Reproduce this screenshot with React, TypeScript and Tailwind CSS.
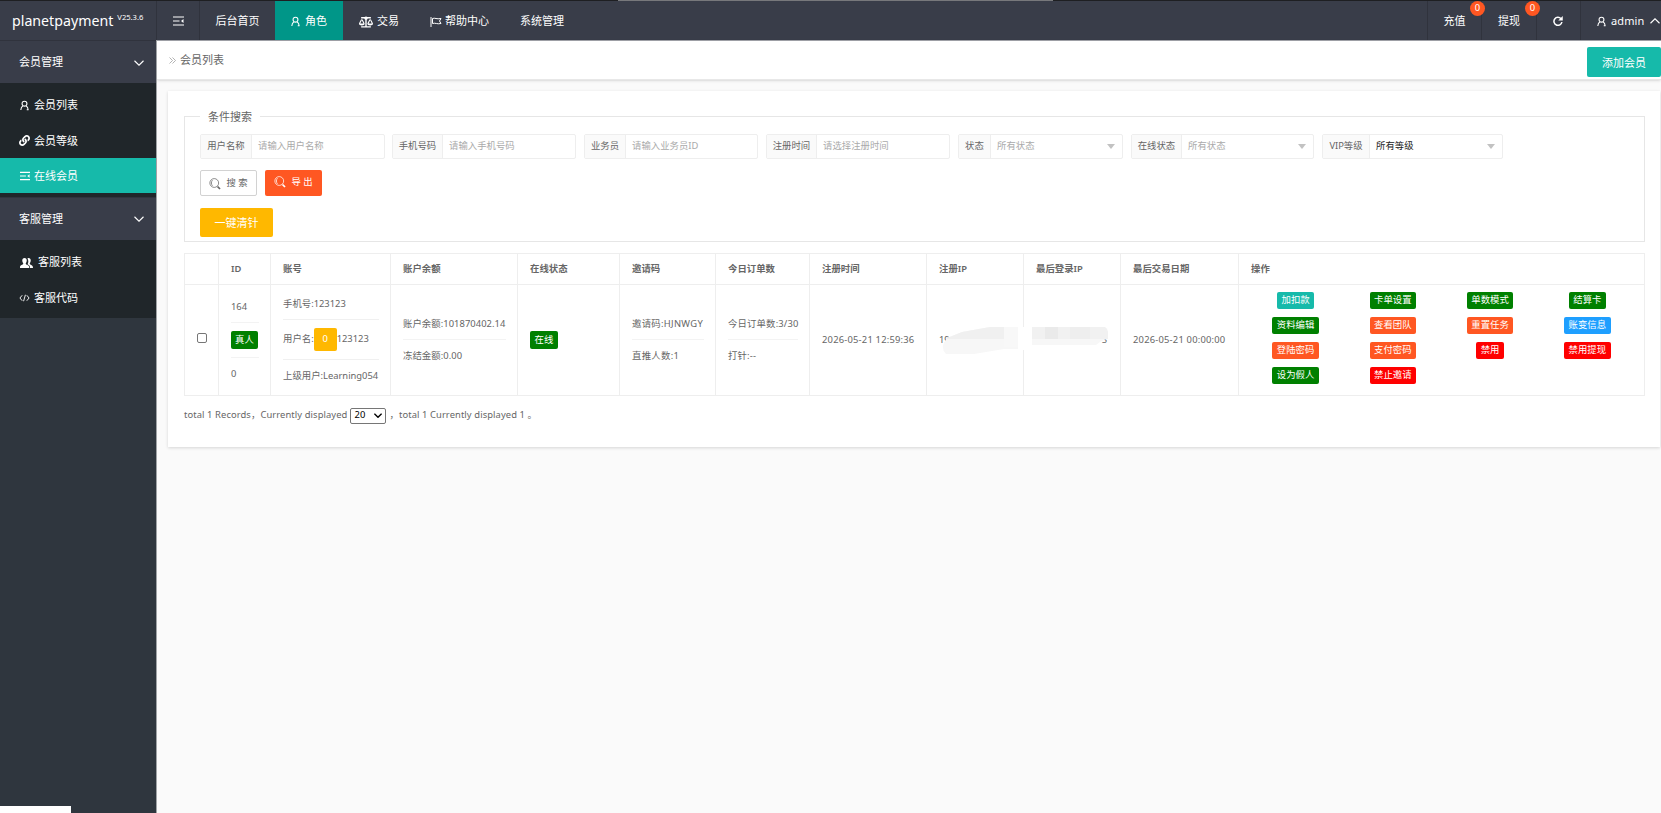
import React from "react";
import clsx from "clsx";
import { FaBalanceScale, FaLink } from "react-icons/fa";

type IconProps = { className?: string };

const UserIcon = ({ className }: IconProps) => (
  <svg viewBox="0 0 20 22" className={className} fill="none" stroke="currentColor" strokeWidth="2.4">
    <circle cx="10" cy="7" r="5.4" />
    <path d="M6.5 11.5C3.5 13.5 2 17 1.8 21M13.5 11.5C16.500 13.500 18 17 18.200 21M15 20.500h4" />
  </svg>
);

const SpreadIcon = ({ className }: IconProps) => (
  <svg viewBox="0 0 22 20" className={className} fill="none" stroke="currentColor" strokeWidth="2.400">
    <path d="M0 2h22M0 10h13M0 18h22" />
    <path d="M21 6v8l-5-4z" fill="currentColor" stroke="none" />
  </svg>
);

const FlagIcon = ({ className }: IconProps) => (
  <svg viewBox="0 0 24 20" className={className} fill="none" stroke="currentColor" strokeWidth="2">
    <path d="M2 0v20M5 3c5-2 8 2 17 0l-3 5 3 5c-8 2-11-2-17 0z" />
  </svg>
);

const GroupIcon = ({ className }: IconProps) => (
  <svg viewBox="0 0 26 20" className={className} fill="currentColor">
    <path d="M9 0c3 0 4.500 2 4.500 5 0 2.500-1 4-2 5.500 0 2 1 2.500 3.500 3.500s3.500 2 3.500 6H0c0-4 .5-5 3-6s3.500-1.500 3.500-3.500c-1-1.500-2-3-2-5.500 0-3 1.500-5 4.500-5z" />
    <path d="M17 0c3 0 4.500 2 4.500 5 0 2.500-1 4-2 5.500 0 2 1 2.500 3 3.500s3.500 2 3.500 6h-6c0-4-1-5.500-5-7.500 0 0 .5-1 1-2 1-2 1-6-1-9.500.5-.7 1-1 2-1z" />
  </svg>
);

const CodeIcon = ({ className }: IconProps) => (
  <svg viewBox="0 0 24 16" className={className} fill="none" stroke="currentColor" strokeWidth="2">
    <path d="M7 2L2 8l5 6M17 2l5 6-5 6M14 1l-4 14" />
  </svg>
);

const SearchIcon = ({ className }: IconProps) => (
  <svg viewBox="0 0 24 24" className={className} fill="none" stroke="currentColor" strokeWidth="1.500">
    <circle cx="10.500" cy="10" r="8.800" />
    <path d="M7 4.500c-3 3-3 8 0 11" />
    <path d="M17 17l5 5" strokeWidth="3.500" />
  </svg>
);

const RefreshIcon = ({ className }: IconProps) => (
  <svg viewBox="0 0 20 20" className={className} fill="none" stroke="currentColor" strokeWidth="3">
    <path d="M16 5.500A8 8 0 1 0 17.800 12" />
    <path d="M19.500 0v9h-9z" fill="currentColor" stroke="none" />
  </svg>
);

const Chevron = ({ className }: IconProps) => (
  <svg viewBox="0 0 20 12" className={className} fill="none" stroke="currentColor" strokeWidth="2.200">
    <path d="M1 1.500l9 9 9-9" />
  </svg>
);

type MenuItem = { label: string; icon: React.ReactNode; active?: boolean };

const memberMenu: MenuItem[] = [
  { label: "会员列表", icon: <UserIcon className="mr-[5px] h-[11px] w-[9px]" /> },
  { label: "会员等级", icon: <FaLink className="mr-[4px] -ml-px h-[11px] w-[11px]" /> },
  { label: "在线会员", icon: <SpreadIcon className="mr-[4px] h-[10px] w-[10px]" />, active: true },
];

const serviceMenu: MenuItem[] = [
  { label: "客服列表", icon: <GroupIcon className="mr-[5px] h-[10px] w-[13px]" /> },
  { label: "客服代码", icon: <CodeIcon className="mr-[4px] -ml-px h-[8px] w-[11px]" /> },
];

const filters = [
  { label: "用户名称", text: "请输入用户名称", labelWidth: "w-[51px]", width: "w-[185px]", gap: "mr-[7px]" },
  { label: "手机号码", text: "请输入手机号码", labelWidth: "w-[50px]", width: "w-[184px]", gap: "mr-[8px]" },
  { label: "业务员", text: "请输入业务员ID", labelWidth: "w-[41px]", width: "w-[174px]", gap: "mr-[8px]" },
  { label: "注册时间", text: "请选择注册时间", labelWidth: "w-[50px]", width: "w-[184px]", gap: "mr-[8px]" },
  { label: "状态", text: "所有状态", labelWidth: "w-[32px]", width: "w-[165px]", gap: "mr-[8px]", select: true },
  { label: "在线状态", text: "所有状态", labelWidth: "w-[50px]", width: "w-[183px]", gap: "mr-[8px]", select: true },
  { label: "VIP等级", text: "所有等级", labelWidth: "w-[47px]", width: "w-[181px]", gap: "", select: true, filled: true },
];

const columns = [
  { title: "", width: "w-[35px]" },
  { title: "ID", width: "w-[52px]" },
  { title: "账号", width: "w-[120px]" },
  { title: "账户余额", width: "w-[127px]" },
  { title: "在线状态", width: "w-[102px]" },
  { title: "邀请码", width: "w-[96px]" },
  { title: "今日订单数", width: "w-[94px]" },
  { title: "注册时间", width: "w-[117px]" },
  { title: "注册IP", width: "w-[97px]" },
  { title: "最后登录IP", width: "w-[97px]" },
  { title: "最后交易日期", width: "w-[118px]" },
  { title: "操作", width: "w-[406px]" },
];

const actions = [
  { label: "加扣款", color: "bg-[#16baaa]" },
  { label: "卡单设置", color: "bg-[#008000]" },
  { label: "单数模式", color: "bg-[#008000]" },
  { label: "结算卡", color: "bg-[#008000]" },
  { label: "资料编辑", color: "bg-[#008000]" },
  { label: "查看团队", color: "bg-[#ff5722]" },
  { label: "重置任务", color: "bg-[#ff5722]" },
  { label: "账变信息", color: "bg-[#1e9fff]" },
  { label: "登陆密码", color: "bg-[#ff5722]" },
  { label: "支付密码", color: "bg-[#ff5722]" },
  { label: "禁用", color: "bg-[#ff0000]" },
  { label: "禁用提现", color: "bg-[#ff0000]" },
  { label: "设为假人", color: "bg-[#008000]" },
  { label: "禁止邀请", color: "bg-[#ff0000]" },
];

const MenuGroup = ({ title }: { title: string }) => (
  <div className="flex h-[43px] items-center justify-between border-t border-[#30333d] bg-[#393d49] pt-px pr-[12px] pl-[19px]">
    <span>{title}</span>
    <Chevron className="h-[6px] w-[10px]" />
  </div>
);

const MenuList = ({ items }: { items: MenuItem[] }) => (
  <div className="bg-[#20262a] py-[4px]">
    {items.map((item) => (
      <div
        key={item.label}
        className={clsx("flex h-[35.300px] items-center pt-[2px] pl-5", item.active && "bg-[#16baaa]")}
      >
        {item.icon}
        <span>{item.label}</span>
      </div>
    ))}
  </div>
);

const Count = () => (
  <span className="absolute top-0 right-[-4px] z-10 flex h-[15px] w-[15px] items-center justify-center rounded-full bg-[#ff5722] text-[9.400px]">
    0
  </span>
);

const Split = ({ top, bottom }: { top: string; bottom: string }) => (
  <div className="-mt-px">
    <div className="h-[17px] leading-[17px]">{top}</div>
    <div className="my-[7px] h-px bg-[#f3f3f3]" />
    <div className="h-[17px] leading-[17px]">{bottom}</div>
  </div>
);

const border = "border-r border-b border-[#eee] py-0";
const cell = clsx(border, "pr-[11px] pl-[12px]");

const App = () => {
  return (
    <div className="flex h-[813px] w-[1661px] flex-col overflow-hidden bg-[#fafafa] font-['Noto_Sans','Noto_Sans_CJK_SC',sans-serif] text-[9.400px] whitespace-nowrap text-[#666]">
      <div className="flex h-px shrink-0 bg-[#1e1f22]">
        <div className="ml-[618px] w-[435px] bg-[#77787b]" />
      </div>

      {/* top bar */}
      <header className="flex h-[40px] shrink-0 border-b border-[#a0a2a8] bg-[#393d49] text-[11px] text-white">
        <div className="flex w-[157px] items-center border-r border-[#30333d] pl-[12px]">
          <span className="text-[14.200px]">planetpayment</span>
          <sup className="-top-1 ml-[4px] text-[7.600px]">V25.3.6</sup>
        </div>
        <div className="flex w-[43px] items-center justify-center border-r border-[#30333d] pt-px">
          <SpreadIcon className="h-[10px] w-[11px]" />
        </div>
        <div className="flex w-[75px] items-center justify-center pt-[2px]">后台首页</div>
        <div className="flex w-[68px] items-center justify-center gap-[5px] bg-[#009688] pt-[2px]">
          <UserIcon className="h-[11px] w-[9px]" />
          角色
        </div>
        <div className="flex w-[72px] items-center gap-1 pt-[2px] pl-4">
          <FaBalanceScale className="h-[12px] w-[14px]" />
          交易
        </div>
        <div className="flex w-[90px] items-center gap-[3px] pt-[2px] pl-[15px]">
          <FlagIcon className="h-[10px] w-[12px]" />
          帮助中心
        </div>
        <div className="flex items-center pt-[2px] pl-[15px]">系统管理</div>
        <div className="ml-auto flex">
          <div className="relative flex w-[54px] items-center justify-center border-l border-[#30333d] pt-[2px]">
            充值
            <Count />
          </div>
          <div className="relative flex w-[55px] items-center justify-center border-l border-[#30333d] pt-[2px]">
            提现
            <Count />
          </div>
          <div className="flex w-[44px] items-center justify-center border-l border-[#30333d] pt-px pr-px">
            <RefreshIcon className="h-[10px] w-[10px]" />
          </div>
          <div className="flex w-[81px] items-center border-l border-[#30333d] pt-px pl-4">
            <UserIcon className="mr-[5px] h-[11px] w-[9px]" />
            <span className="tracking-[0.1px]">admin</span>
            <Chevron className="ml-[6px] h-[6px] w-[10px] shrink-0 rotate-180" />
          </div>
        </div>
      </header>

      <div className="flex min-h-0 flex-1">
        <aside className="relative -mt-px flex w-[157px] shrink-0 flex-col border-r border-[#a0a3a6] bg-[#2f363e] text-[11px] text-white">
          <MenuGroup title="会员管理" />
          <MenuList items={memberMenu} />
          <MenuGroup title="客服管理" />
          <MenuList items={serviceMenu} />
          <div className="mt-auto h-[7px] w-[71px] bg-white" />
        </aside>

        <main className="min-w-0 flex-1">
          <div className="flex h-[39px] items-center justify-between border-b border-[#e8e8e8] bg-white pl-3 text-[11px] shadow-sm">
            <div className="flex items-center pt-px">
              <svg viewBox="0 0 14 14" className="mr-[4px] h-[7px] w-[7px]" fill="none" stroke="#999" strokeWidth="1.500">
                <path d="M1 1l6 6-6 6M7 1l6 6-6 6" />
              </svg>
              会员列表
            </div>
            <button className="mt-1 flex h-[30px] w-[74px] items-center justify-center rounded-[2px] bg-[#16baaa] pt-[2px] text-white">
              添加会员
            </button>
          </div>

          <section className="mt-[11px] mr-px ml-[11px] h-[356px] bg-white px-4 pt-[16px] shadow-[0_1px_3px_rgba(0,0,0,0.15)]">
            <fieldset className="h-[135px] w-[1461px] border border-[#e6e6e6] pl-[15px]">
              <legend className="h-[18px] px-2 text-[11px] leading-[20px]">条件搜索</legend>
              <div className="mt-[9px] flex h-[25px]">
                {filters.map((f) => (
                  <div
                    key={f.label}
                    className={clsx("flex items-center rounded-[2px] border border-[#eee]", f.width, f.gap)}
                  >
                    <div
                      className={clsx(
                        "flex h-full shrink-0 items-center justify-center border-r border-[#eee] bg-[#fafafa]",
                        f.labelWidth
                      )}
                    >
                      {f.label}
                    </div>
                    <span className={clsx("pl-[6px]", f.filled ? "text-[#222]" : "text-[#aaa]")}>{f.text}</span>
                    {f.select && (
                      <i className="mr-[7px] ml-auto border-x-[4.500px] border-t-[5px] border-x-transparent border-t-[#c2c2c2]" />
                    )}
                  </div>
                ))}
              </div>
              <div className="mt-[11px] flex h-[26px] gap-2">
                <button className="flex w-[57px] items-center justify-center rounded-[2px] border border-[#d2d2d2] pt-px">
                  <SearchIcon className="mr-[5px] h-[12px] w-[12px]" />搜 索
                </button>
                <button className="flex w-[57px] items-center justify-center rounded-[2px] bg-[#ff5722] pb-[2px] text-white">
                  <SearchIcon className="mr-[5px] h-[12px] w-[12px]" />导 出
                </button>
              </div>
              <button className="mt-[12px] flex h-[29px] w-[73px] items-center justify-center rounded-[2px] bg-[#ffb800] pt-[2px] text-[11px] text-white">
                一键清针
              </button>
            </fieldset>

            <table className="mt-[11px] w-[1461px] table-fixed border-separate border-spacing-0">
              <thead>
                <tr className="h-[32px]">
                  {columns.map((c, i) => (
                    <th
                      key={c.title}
                      className={clsx(cell, c.width, "border-t text-left font-semibold", i === 0 && "border-l")}
                    >
                      {c.title}
                    </th>
                  ))}
                </tr>
              </thead>
              <tbody>
                <tr className="h-[111px]">
                  <td className={clsx(cell, "border-l")}>
                    <div className="mt-[-4px] h-[10px] w-[10px] rounded-[2px] border border-[#767676]" />
                  </td>
                  <td className={cell}>
                    <div className="h-[17px] leading-[17px]">164</div>
                    <div className="mt-[7px] h-px bg-[#f3f3f3]" />
                    <div className="my-[8px] flex h-[18px] w-[27px] items-center justify-center rounded-[2px] bg-[#008000] text-white">
                      真人
                    </div>
                    <div className="mb-[7px] h-px bg-[#f3f3f3]" />
                    <div className="h-[17px] leading-[17px]">0</div>
                  </td>
                  <td className={cell}>
                    <div className="-mt-[2px] h-[17px] leading-[17px]">手机号:123123</div>
                    <div className="mt-[7px] h-px bg-[#f0f0f0]" />
                    <div className="my-[8px] flex h-[23px] items-center">
                      用户名:
                      <span className="flex h-[23px] w-[23px] items-center justify-center rounded-[2px] bg-[#ffb800] text-white">
                        0
                      </span>
                      123123
                    </div>
                    <div className="mb-[7px] h-px bg-[#f0f0f0]" />
                    <div className="h-[17px] leading-[17px]">上级用户:Learning054</div>
                  </td>
                  <td className={clsx(cell, "tracking-[0.050px]")}>
                    <Split top="账户余额:101870402.14" bottom="冻结金额:0.00" />
                  </td>
                  <td className={cell}>
                    <div className="flex h-[18px] w-[28px] items-center justify-center rounded-[2px] bg-[#008000] text-white">
                      在线
                    </div>
                  </td>
                  <td className={clsx(cell, "tracking-[0.300px]")}>
                    <Split top="邀请码:HJNWGY" bottom="直推人数:1" />
                  </td>
                  <td className={clsx(cell, "tracking-[0.150px]")}>
                    <Split top="今日订单数:3/30" bottom="打针:--" />
                  </td>
                  <td className={clsx(cell, "tracking-[0.200px]")}>2026-05-21 12:59:36</td>
                  <td className={clsx(cell, "relative")}>
                    19
                    {/* masked addresses, spans both IP columns */}
                    <svg viewBox="0 0 170 30" className="absolute top-[41px] left-[13px] z-10 h-[30px] w-[170px]">
                      <path d="M7 12L22 6l28-5h28l14 1h73q3 2 3 6v4l-8 4-4 3H92l-12 4H64l-30 5H6q-4-4-3-9z" fill="#f7f7f7" />
                      <path d="M7 12L22 6l28-5h14v12H6z" fill="#f0f0f0" />
                      <path d="M64 1h14v20H64z" fill="#f8f8f8" />
                      <path d="M78 1h14v23H78z" fill="#fff" />
                      <path d="M92 1h73q3 2 3 6v6H92z" fill="#f1f1f1" />
                      <path d="M105 1h13v12h-13z" fill="#eaeaea" />
                      <path d="M130 1h20v12h-20z" fill="#eee" />
                    </svg>
                  </td>
                  <td className={clsx(cell, "text-right")}>
                    <span className="mr-[2px]">5</span>
                  </td>
                  <td className={clsx(cell, "tracking-[0.200px]")}>2026-05-21 00:00:00</td>
                  <td className={clsx(border, "px-[8px]")}>
                    <div className="mt-[-5px] grid grid-cols-4 gap-y-[8px]">
                      {actions.map((a) => (
                        <div
                          key={a.label}
                          className={clsx(
                            "flex h-[17px] items-center justify-self-center rounded-[2px] px-[4.500px] text-white",
                            a.color
                          )}
                        >
                          {a.label}
                        </div>
                      ))}
                    </div>
                  </td>
                </tr>
              </tbody>
            </table>

            <div className="mt-[11px] flex h-[17px] items-center tracking-[0.090px]">
              <span>total 1 Records，Currently displayed</span>
              <span className="mx-[3px] flex h-[16px] w-[36px] items-center justify-between rounded-[2px] border border-[#767676] px-[3px] text-black">
                20
                <Chevron className="h-[5px] w-[8px] stroke-[3.500px]" />
              </span>
              <span>，total 1 Currently displayed 1 。</span>
            </div>
          </section>
        </main>
      </div>
    </div>
  );
};

export default App;
